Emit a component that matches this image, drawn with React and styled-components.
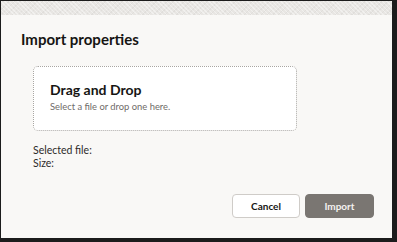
import React from "react";
import styled, { createGlobalStyle } from "styled-components";

const Global = createGlobalStyle`
  html, body { margin: 0; padding: 0; background: #1c1c1c; }
  * { box-sizing: border-box; }
`;

const Frame = styled.div`
  width: 397px;
  height: 242px;
  padding: 1px 5px 4px 1px;
  display: flex;
  flex-direction: column;
  background: #1c1c1c;
  font-family: Lato, "Noto Sans", sans-serif;
`;

const Backdrop = styled.div`
  height: 14px;
  flex: none;
  background-color: #e8e6e3;
  background-image: repeating-linear-gradient(
      45deg,
      rgba(255, 255, 255, 0.4) 0 1px,
      transparent 1px 3px
    ),
    repeating-linear-gradient(
      -45deg,
      rgba(0, 0, 0, 0.035) 0 1px,
      transparent 1px 4px
    );
`;

const Dialog = styled.div`
  flex: 1;
  background: #f9f8f6;
  display: flex;
  flex-direction: column;
  padding: 13px 18px 20px 20px;
`;

const Title = styled.h1`
  margin: 0;
  font-size: 15px;
  line-height: 22px;
  font-weight: 700;
  color: #161513;
`;

const Body = styled.div`
  flex: 1;
  display: flex;
  flex-direction: column;
  padding-left: 12px;
  padding-top: 16px;
`;

const DropZone = styled.div`
  width: 264px;
  height: 65px;
  background: #ffffff;
  border: 1px dotted #a9a6a2;
  border-radius: 5px;
  padding: 13px 16px;
  display: flex;
  flex-direction: column;
`;

const DropTitle = styled.div`
  font-size: 14px;
  line-height: 20px;
  font-weight: 700;
  color: #161513;
`;

const DropHint = styled.div`
  font-size: 9.4px;
  line-height: 12px;
  color: #6f6c69;
  margin-top: 1px;
`;

const Info = styled.div`
  margin-top: 13px;
  display: flex;
  flex-direction: column;
`;

const InfoLine = styled.div`
  font-size: 10.5px;
  line-height: 12.5px;
  color: #2d2b29;
`;

const Footer = styled.div`
  display: flex;
  justify-content: flex-end;
  gap: 5px;
`;

const Button = styled.button`
  width: ${(p) => (p.$primary ? "69px" : "68px")};
  height: 24px;
  border-radius: 4px;
  font-family: inherit;
  font-size: 10px;
  font-weight: 700;
  padding: 0;
  cursor: pointer;
  border: 1px solid ${(p) => (p.$primary ? "#7a7672" : "#cfccc8")};
  background: ${(p) => (p.$primary ? "#7a7672" : "#ffffff")};
  color: ${(p) => (p.$primary ? "#f4f2f0" : "#161513")};
`;

export default function App() {
  return (
    <>
      <Global />
      <Frame>
        <Backdrop />
        <Dialog>
          <Title>Import properties</Title>
          <Body>
            <DropZone>
              <DropTitle>Drag and Drop</DropTitle>
              <DropHint>Select a file or drop one here.</DropHint>
            </DropZone>
            <Info>
              <InfoLine>Selected file:</InfoLine>
              <InfoLine>Size:</InfoLine>
            </Info>
          </Body>
          <Footer>
            <Button>Cancel</Button>
            <Button $primary>Import</Button>
          </Footer>
        </Dialog>
      </Frame>
    </>
  );
}
